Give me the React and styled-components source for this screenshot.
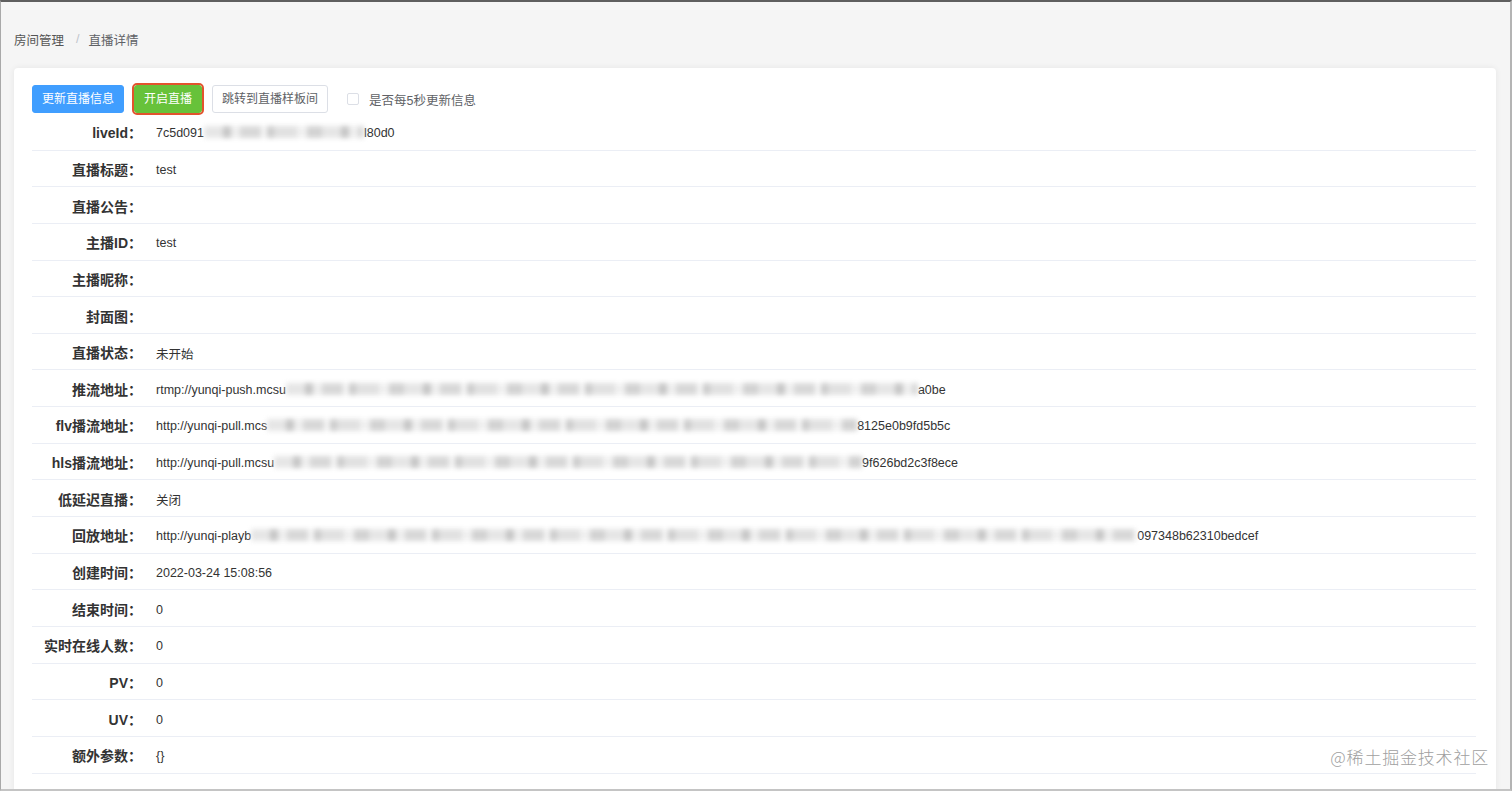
import React from 'react';
import styled, { createGlobalStyle } from 'styled-components';

const GlobalStyle = createGlobalStyle`
  html, body {
    margin: 0;
    padding: 0;
    background: #ffffff;
  }
  body {
    font-family: "Liberation Sans", "Noto Sans CJK SC", Arial, sans-serif;
    color: #333333;
  }
`;

const Frame = styled.div`
  position: relative;
  box-sizing: border-box;
  width: 1512px;
  height: 791px;
  overflow: hidden;
  background: #f5f5f5;
  border-top: 2px solid #5f5f5f;
  border-left: 1px solid #a9a9a9;
  border-right: 2px solid #b4b4b4;
  border-bottom: 2px solid #c4c4c4;
  padding: 27px 14px 0 13px;
`;

const Breadcrumb = styled.div`
  display: flex;
  align-items: center;
  height: 20px;
  font-size: 12.5px;
  color: #555555;
  margin-bottom: 19px;
`;

const Crumb = styled.span`
  color: ${(p) => (p.$current ? '#606266' : '#555555')};
`;

const Sep = styled.span`
  color: #c0c4cc;
  margin: 0 9px 0 12px;
`;

const Card = styled.div`
  background: #ffffff;
  border-radius: 4px;
  box-shadow: 0 0 6px rgba(0, 0, 0, 0.07);
  padding: 17px 20px 20px 18px;
`;

const Toolbar = styled.div`
  display: flex;
  align-items: center;
  height: 28px;
  margin-bottom: 1px;
`;

const palette = {
  primary: { bg: '#409eff', border: '#409eff', color: '#ffffff' },
  success: { bg: '#67c23a', border: '#67c23a', color: '#ffffff' },
  plain: { bg: '#ffffff', border: '#dcdfe6', color: '#606266' },
};

const Button = styled.button`
  box-sizing: border-box;
  height: 28px;
  padding: 0 9px;
  margin-right: 10px;
  border-radius: 3px;
  border: 1px solid ${(p) => palette[p.$kind].border};
  background: ${(p) => palette[p.$kind].bg};
  color: ${(p) => palette[p.$kind].color};
  font-family: "Liberation Sans", "Noto Sans CJK SC", sans-serif;
  font-size: 12px;
  line-height: 26px;
  white-space: nowrap;
  cursor: pointer;
  outline: ${(p) => (p.$marked ? '2px solid #e2532d' : 'none')};
  outline-offset: 0;
`;

const CheckLabel = styled.label`
  display: flex;
  align-items: center;
  margin-left: 9px;
  font-size: 12.5px;
  color: #606266;
  cursor: pointer;
`;

const CheckBox = styled.span`
  box-sizing: border-box;
  width: 12px;
  height: 12px;
  border: 1px solid #dcdfe6;
  border-radius: 2px;
  background: #ffffff;
  margin-right: 10px;
`;

const Row = styled.div`
  box-sizing: border-box;
  display: flex;
  align-items: center;
  height: 36.65px;
  border-bottom: 1px solid #ebeef5;
`;

const Label = styled.div`
  width: 110px;
  flex-shrink: 0;
  text-align: right;
  font-size: 14px;
  font-weight: 700;
  color: #333333;
  white-space: nowrap;
  padding-top: 1px;
`;

const Value = styled.div`
  margin-left: 14px;
  padding-top: 3px;
  font-size: 12.5px;
  color: #333333;
  white-space: nowrap;
  display: flex;
  align-items: center;
`;

/* pixelated mask over the hidden part of an address */
const Blur = styled.span`
  display: inline-block;
  width: ${(p) => p.$w}px;
  height: 12px;
  margin-top: -2px;
  background:
    repeating-linear-gradient(
      90deg,
      #e2e2e2 0 19px,
      #bdbdbd 19px 27px,
      #ececec 27px 36px,
      #d2d2d2 36px 57px,
      #f4f4f4 57px 63px,
      #c4c4c4 63px 70px,
      #dcdcdc 70px 93px,
      #efefef 93px 103px,
      #cbcbcb 103px 118px
    );
  filter: blur(2.6px);
  opacity: 0.85;
`;

const Watermark = styled.div`
  position: absolute;
  right: 21px;
  bottom: 20px;
  font-family: "Noto Sans CJK SC", sans-serif;
  font-size: 17px;
  font-weight: 300;
  color: #a0a0a0;
  text-shadow: 0 0 2px #ffffff, 0 0 1px #ffffff;
  letter-spacing: 0.8px;
`;

const Masked = ({ head, w, tail }) => (
  <>
    <span>{head}</span>
    <Blur $w={w} />
    <span>{tail}</span>
  </>
);

const rows = [
  { label: 'liveId：', value: <Masked head="7c5d091" w={160} tail="l80d0" /> },
  { label: '直播标题：', value: 'test' },
  { label: '直播公告：', value: '' },
  { label: '主播ID：', value: 'test' },
  { label: '主播昵称：', value: '' },
  { label: '封面图：', value: '' },
  { label: '直播状态：', value: '未开始' },
  { label: '推流地址：', value: <Masked head="rtmp://yunqi-push.mcsu" w={632} tail="a0be" /> },
  { label: 'flv播流地址：', value: <Masked head="http://yunqi-pull.mcs" w={590} tail="8125e0b9fd5b5c" /> },
  { label: 'hls播流地址：', value: <Masked head="http://yunqi-pull.mcsu" w={588} tail="9f626bd2c3f8ece" /> },
  { label: '低延迟直播：', value: '关闭' },
  { label: '回放地址：', value: <Masked head="http://yunqi-playb" w={886} tail="097348b62310bedcef" /> },
  { label: '创建时间：', value: '2022-03-24 15:08:56' },
  { label: '结束时间：', value: '0' },
  { label: '实时在线人数：', value: '0' },
  { label: 'PV：', value: '0' },
  { label: 'UV：', value: '0' },
  { label: '额外参数：', value: '{}' },
];

export default function App() {
  return (
    <>
      <GlobalStyle />
      <Frame>
        <Breadcrumb>
          <Crumb>房间管理</Crumb>
          <Sep>/</Sep>
          <Crumb $current>直播详情</Crumb>
        </Breadcrumb>
        <Card>
          <Toolbar>
            <Button $kind="primary">更新直播信息</Button>
            <Button $kind="success" $marked>开启直播</Button>
            <Button $kind="plain">跳转到直播样板间</Button>
            <CheckLabel>
              <CheckBox />
              是否每5秒更新信息
            </CheckLabel>
          </Toolbar>
          {rows.map((r) => (
            <Row key={r.label}>
              <Label>{r.label}</Label>
              <Value>{r.value}</Value>
            </Row>
          ))}
        </Card>
        <Watermark>@稀土掘金技术社区</Watermark>
      </Frame>
    </>
  );
}
